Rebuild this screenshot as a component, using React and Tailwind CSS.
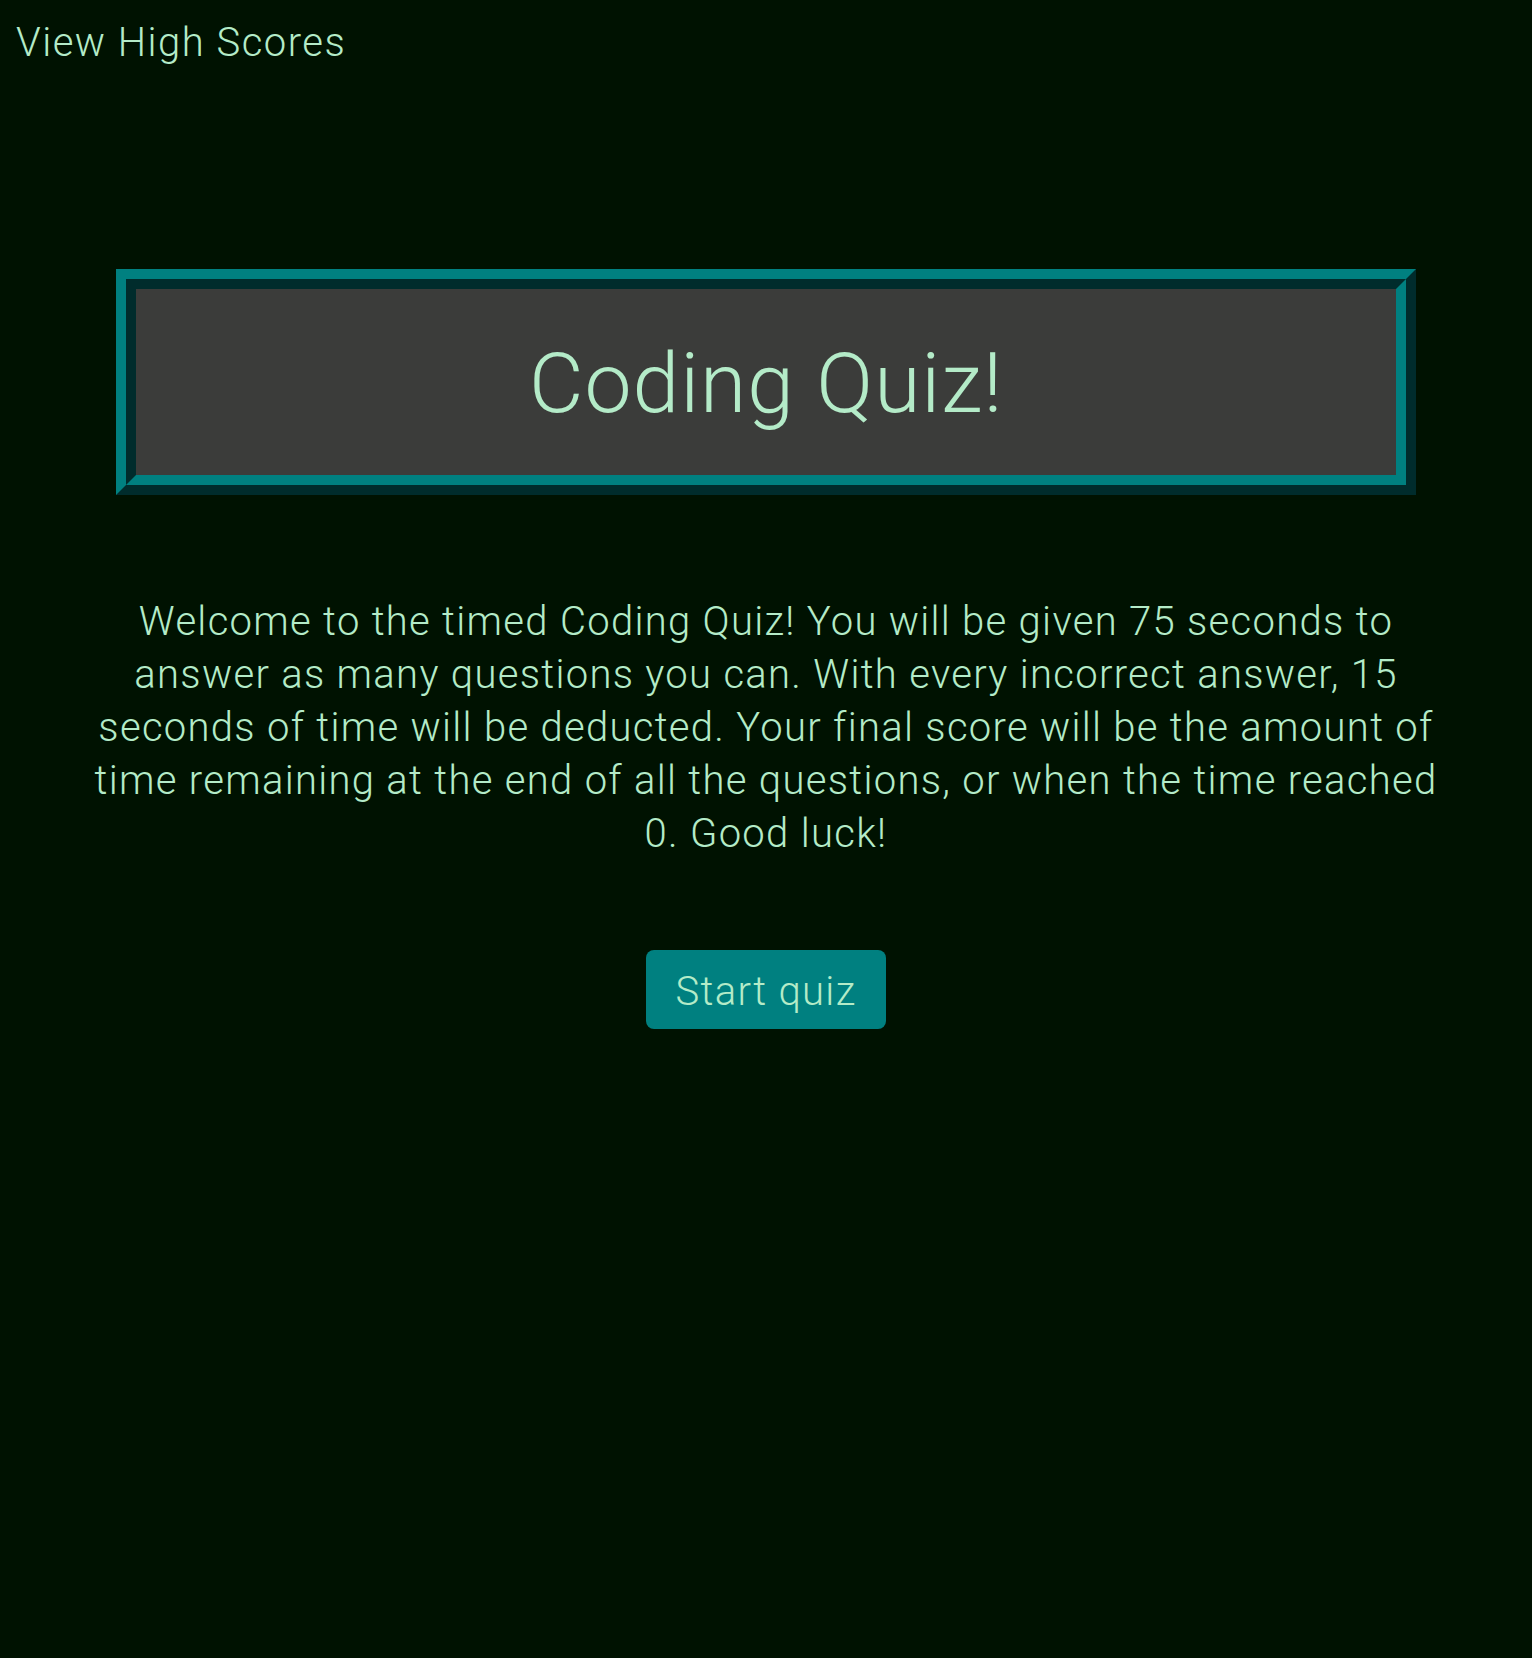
import React from "react";

export default function App() {
  const handleStart = () => {
    console.log("start quiz");
  };

  return (
    <div
      className="min-h-screen bg-[#001201] text-[#b4ebc8] font-light"
      style={{ fontFamily: '"Roboto Slab", Roboto, "Noto Sans", sans-serif' }}
    >
      {/* Header */}
      <header className="pt-[16px] px-[16px]">
        <a href="#" className="text-[40px] leading-[53px] tracking-[1.5px]">
          View High Scores
        </a>
      </header>

      <main className="flex flex-col items-center">
        {/* Title box */}
        <div className="mt-[200px] w-[1300px] border-[20px] [border-style:ridge] border-[#008080] bg-[#3b3c3a] pt-[45px] pb-[41px] text-center">
          <h1 className="text-[84px] leading-[100px] font-light tracking-[1px]">Coding Quiz!</h1>
        </div>

        {/* Intro */}
        <p className="mt-[100px] px-[40px] text-center text-[40px] leading-[53px] tracking-[1.3px]">
          Welcome to the timed Coding Quiz! You will be given 75 seconds to
          <br />
          answer as many questions you can. With every incorrect answer, 15
          <br />
          seconds of time will be deducted. Your final score will be the amount of
          <br />
          time remaining at the end of all the questions, or when the time reached
          <br />
          0. Good luck!
        </p>

        {/* Start */}
        <button
          onClick={handleStart}
          className="mt-[90px] w-[240px] pt-[15px] pb-[11px] rounded-lg bg-[#008080] text-[40px] leading-[53px] font-light tracking-[1.3px] text-[#b4ebc8]"
        >
          Start quiz
        </button>
      </main>
    </div>
  );
}
